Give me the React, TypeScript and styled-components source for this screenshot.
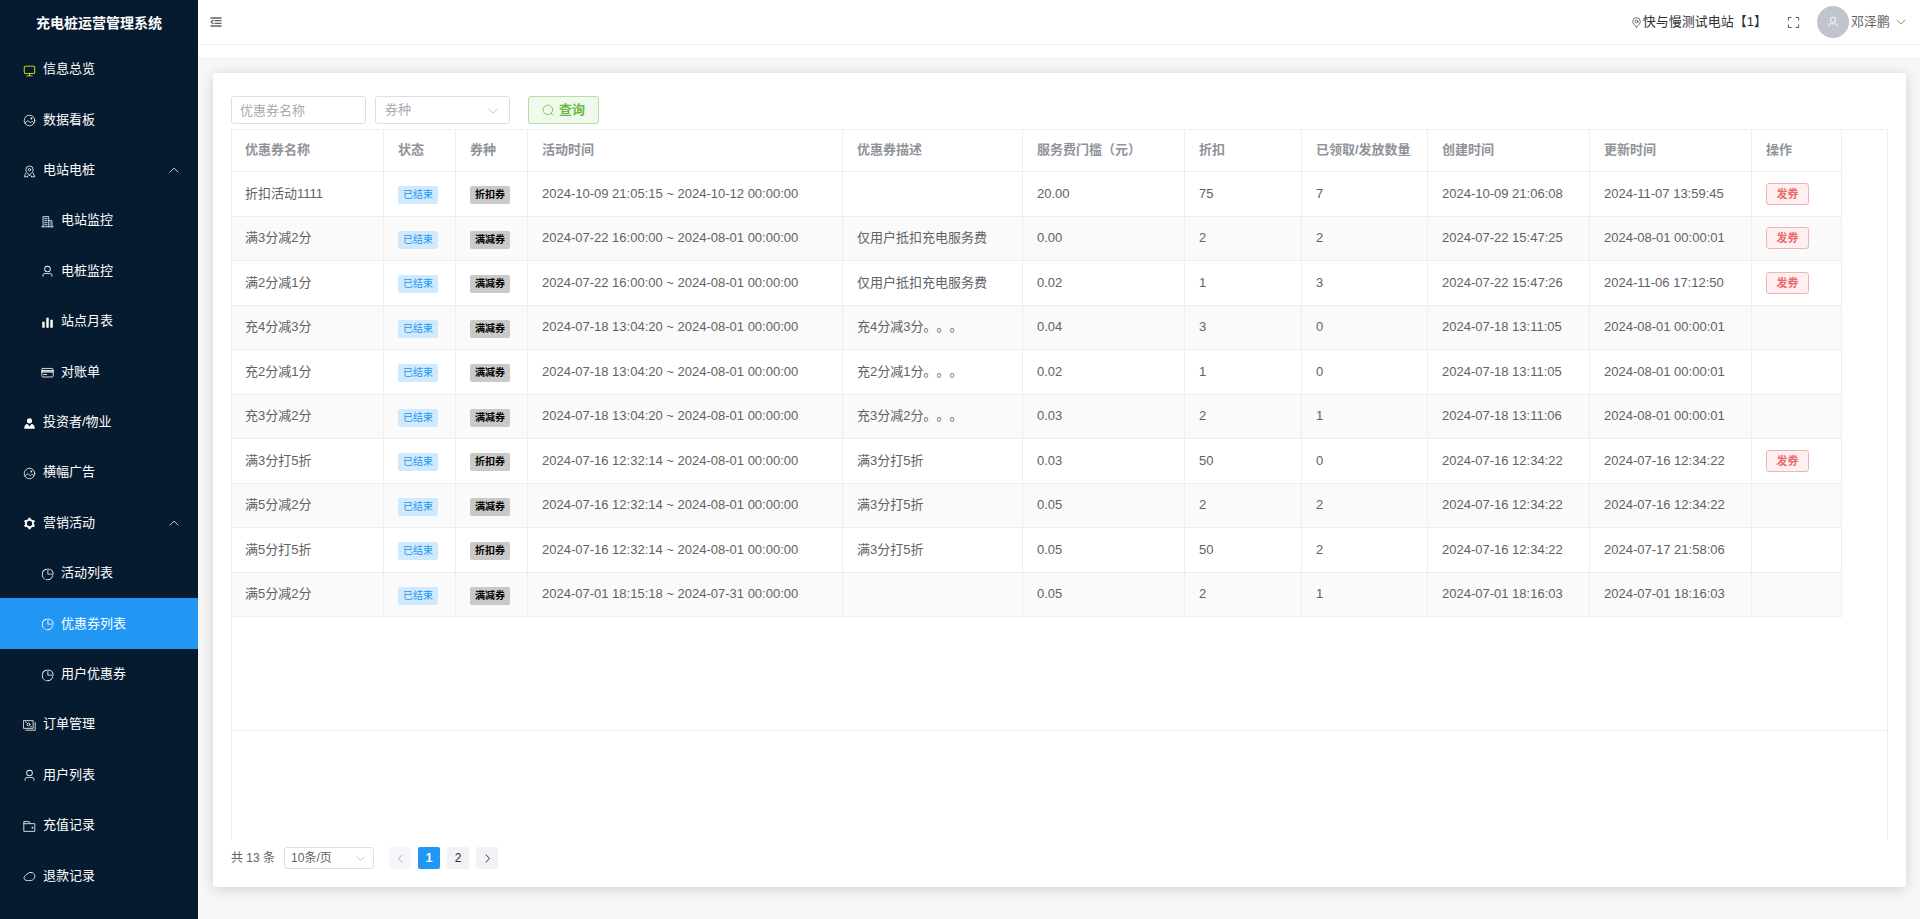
import React from "react";
import styled, { createGlobalStyle } from "styled-components";

const GlobalStyle = createGlobalStyle`
  *, *::before, *::after { box-sizing: border-box; }
  body {
    margin: 0;
    font-family: "Liberation Sans", "Noto Sans CJK SC", sans-serif;
    font-size: 13px;
    line-height: 20px;
    text-spacing-trim: space-all;
    color: #606266;
    background: #f7f7f7;
  }
  button, input, select { font: inherit; }
`;

/* ---------- icons, drawn on a 1024 grid ---------- */

type IconName =
  | "monitor" | "picture" | "place" | "building" | "user" | "bars" | "card"
  | "avatar" | "gear" | "pie" | "money" | "wallet" | "blob" | "down" | "up"
  | "left" | "right" | "fold" | "pin" | "full" | "search";

const Svg = styled.svg<{ $size: number }>`
  display: block;
  flex: none;
  width: ${(p) => p.$size}px;
  height: ${(p) => p.$size}px;
  fill: none;
  stroke: currentColor;
  stroke-width: 64;
  stroke-linecap: round;
  stroke-linejoin: round;
  .solid { fill: currentColor; stroke: none; }
`;

const drawings: Record<IconName, React.ReactNode> = {
  monitor: (
    <path
      className="solid"
      d="M544 768v128h192a32 32 0 1 1 0 64H288a32 32 0 1 1 0-64h192V768H192A128 128 0 0 1 64 640V256a128 128 0 0 1 128-128h640a128 128 0 0 1 128 128v384a128 128 0 0 1-128 128zM192 192a64 64 0 0 0-64 64v384a64 64 0 0 0 64 64h640a64 64 0 0 0 64-64V256a64 64 0 0 0-64-64z"
    />
  ),
  picture: (
    <>
      <circle cx="512" cy="512" r="416" />
      <circle className="solid" cx="660" cy="360" r="76" />
      <path d="M170 720 340 540q40-40 84 0l110 120q40 40 84-6l60-60q40-36 84 0l90 90" />
    </>
  ),
  place: (
    <>
      <path d="M512 800C330 640 224 520 224 368a288 288 0 0 1 576 0c0 152-106 272-288 432z" />
      <circle cx="512" cy="368" r="92" />
      <path d="M220 640 96 928h250M804 640l124 288H678M346 928l50-90M678 928l-50-90" />
    </>
  ),
  building: (
    <>
      <path d="M160 928V128h448v800M608 448h256v480M64 928h896" />
      <path d="M288 288h192M288 448h192M288 608h192M288 768h192M736 608v32M736 768v32" />
    </>
  ),
  user: (
    <path
      className="solid"
      d="M512 512a192 192 0 1 0 0-384 192 192 0 0 0 0 384m0 64a256 256 0 1 1 0-512 256 256 0 0 1 0 512m320 320v-96a96 96 0 0 0-96-96H288a96 96 0 0 0-96 96v96a32 32 0 1 1-64 0v-96a160 160 0 0 1 160-160h448a160 160 0 0 1 160 160v96a32 32 0 1 1-64 0"
    />
  ),
  bars: (
    <path className="solid" d="M416 128h192v800H416zM96 448h192v480H96zM736 288h192v640H736z" />
  ),
  card: (
    <>
      <rect x="64" y="192" width="896" height="672" rx="96" />
      <path className="solid" d="M64 352h896v128H64z" opacity="0.6" />
      <path d="M64 352h896M64 480h896M192 672h256" />
    </>
  ),
  avatar: (
    <path
      className="solid"
      d="M512 96a204 204 0 1 1 0 408 204 204 0 0 1 0-408M360 560l152 190 152-190c160 10 256 110 264 368H96c8-258 104-358 264-368"
    />
  ),
  gear: (
    <>
      <circle cx="512" cy="512" r="286" strokeWidth="150" />
      <path
        strokeWidth="180"
        strokeLinecap="butt"
        d="M512 220V64M512 804v156M260 366 124 288M764 658l136 78M260 658l-136 78M764 366l136-78"
      />
    </>
  ),
  pie: (
    <>
      <path
        className="solid"
        d="M448 68.48v64.832A384.128 384.128 0 0 0 512 896a384.128 384.128 0 0 0 378.688-320h64.768A448.128 448.128 0 0 1 64 512 448.128 448.128 0 0 1 448 68.48z"
      />
      <path
        className="solid"
        d="M576 97.28V448h350.72A384.064 384.064 0 0 0 576 97.28zM512 64V33.152A448 448 0 0 1 990.848 512H512z"
        fillRule="evenodd"
      />
    </>
  ),
  money: (
    <>
      <rect x="64" y="128" width="736" height="608" />
      <path d="M224 880h736V288" />
      <circle cx="432" cy="432" r="110" />
      <path d="M192 256h60M612 608h60" />
    </>
  ),
  wallet: (
    <>
      <path d="M96 128h400l80 160h352v608H96z" />
      <path d="M96 288h480" />
      <circle className="solid" cx="744" cy="608" r="70" />
    </>
  ),
  blob: (
    <path d="M600 190c190-10 330 110 330 290 0 130-60 240-180 310-60 34-130 44-210 44H340c-150 0-260-90-260-210 0-110 80-180 170-220C320 290 440 198 600 190z" />
  ),
  down: <path d="M170 362 512 694l342-332" />,
  up: <path d="M170 684 512 352l342 332" />,
  left: <path d="M652 170 320 512l332 342" />,
  right: <path d="M372 170l332 342-332 342" />,
  fold: (
    <path
      strokeLinecap="butt"
      strokeWidth="112"
      d="M40 170h944M380 400h604M380 624h604M40 854h944M290 340 110 512l180 172"
    />
  ),
  pin: (
    <>
      <path d="M512 940C290 730 160 590 160 416a352 352 0 0 1 704 0c0 174-130 314-352 524z" />
      <circle cx="512" cy="416" r="136" />
    </>
  ),
  full: (
    <path
      strokeLinecap="butt"
      strokeLinejoin="miter"
      strokeWidth="80"
      d="M110 350V110h240M674 110h240v240M914 674v240H674M350 914H110V674"
    />
  ),
  search: (
    <>
      <circle cx="500" cy="500" r="404" />
      <path d="M790 790l110 130" />
    </>
  ),
};

const Icon = ({ name, size = 12 }: { name: IconName; size?: number }) => (
  <Svg viewBox="0 0 1024 1024" $size={size} aria-hidden="true">
    {drawings[name]}
  </Svg>
);

/* ---------- layout ---------- */

const Page = styled.div`
  display: flex;
  min-height: 100vh;
`;

const Sidebar = styled.aside`
  flex: none;
  display: flex;
  flex-direction: column;
  width: 198px;
  padding-bottom: 18px;
  background: #071b30;
  color: #fff;
`;

const Brand = styled.h1`
  margin: 0;
  height: 44px;
  padding-top: 2px;
  font-size: 14px;
  line-height: 42px;
  text-align: center;
`;

const Menu = styled.nav`
  flex: 1;
  display: flex;
  flex-direction: column;
`;

const MenuItem = styled.a<{ $sub?: boolean; $active?: boolean }>`
  flex: 1 0 50px;
  display: flex;
  align-items: center;
  gap: 7px;
  padding: 0 18px 0 ${(p) => (p.$sub ? 41 : 23)}px;
  color: #fff;
  text-decoration: none;
  background: ${(p) => (p.$active ? "#2196f3" : "transparent")};
`;

const MenuIcon = styled.span<{ $color?: string }>`
  padding-top: 2px;
  color: ${(p) => p.$color ?? "inherit"};
`;

const MenuLabel = styled.span`
  flex: 1;
`;

const Content = styled.div`
  flex: 1;
  min-width: 0;
  display: flex;
  flex-direction: column;
`;

const TopBar = styled.header`
  display: flex;
  align-items: center;
  justify-content: space-between;
  height: 45px;
  padding: 0 13px 0 12px;
  background: #fff;
  border-bottom: 1px solid #f0f0f0;
`;

const TabStrip = styled.div`
  height: 14px;
  background: #fff;
  border-bottom: 1px solid #f0f0f0;
`;

const IconButton = styled.button`
  display: flex;
  padding: 0;
  border: 0;
  background: none;
  color: #606266;
  cursor: pointer;
`;

const TopRight = styled.div`
  display: flex;
  align-items: center;
`;

const Station = styled.span`
  display: flex;
  align-items: center;
  gap: 1px;
  margin-right: 20px;
  color: #303133;
`;

const UserMenu = styled.button`
  display: flex;
  align-items: center;
  margin-left: 17px;
  padding: 0;
  border: 0;
  background: none;
  color: #606266;
  cursor: pointer;
`;

const AvatarCircle = styled.span`
  display: flex;
  align-items: center;
  justify-content: center;
  width: 32px;
  height: 32px;
  margin-right: 2px;
  border-radius: 50%;
  background: #c0c4cc;
  color: #fff;
`;

const UserName = styled.span`
  margin-right: 5px;
`;

const Card = styled.main`
  flex: 1;
  display: flex;
  flex-direction: column;
  min-width: 0;
  margin: 14px 14px 32px 15px;
  padding: 23px 18px 18px;
  background: #fff;
  border-radius: 3px;
  box-shadow: 0 2px 14px rgba(0, 0, 0, 0.16);
`;

const Filters = styled.form`
  display: flex;
  margin-bottom: 5px;
`;

const TextField = styled.input`
  width: 135px;
  height: 28px;
  margin-right: 9px;
  padding: 0 8px;
  border: 1px solid #dcdfe6;
  border-radius: 3px;
  outline: none;
  color: #606266;
  &::placeholder { color: #a8abb2; opacity: 1; }
`;

const SelectBox = styled.span<{ $width: number; $height: number; $pad: number; $size: number; $color: string }>`
  position: relative;
  display: block;
  width: ${(p) => p.$width}px;
  select {
    display: block;
    width: 100%;
    height: ${(p) => p.$height}px;
    padding: 0 ${(p) => p.$pad}px;
    border: 1px solid #dcdfe6;
    border-radius: 3px;
    outline: none;
    appearance: none;
    background: #fff;
    font-size: ${(p) => p.$size}px;
    color: ${(p) => p.$color};
  }
  svg {
    position: absolute;
    top: 50%;
    right: ${(p) => p.$pad + 2}px;
    margin-top: -5px;
    color: #a8abb2;
    pointer-events: none;
  }
`;

const SearchButton = styled.button`
  display: flex;
  align-items: center;
  justify-content: center;
  gap: 5px;
  width: 71px;
  height: 28px;
  margin-left: 18px;
  padding: 0;
  border: 1px solid #b3e19d;
  border-radius: 3px;
  background: #f0f9eb;
  color: #67b944;
  font-weight: 700;
  cursor: pointer;
`;

const TableFrame = styled.div`
  flex: 1;
  display: flex;
  min-width: 0;
  padding-bottom: 108px;
  border: solid #ebeef5;
  border-width: 0 1px;
`;

const TableArea = styled.div`
  flex: 1;
  min-width: 0;
  overflow-x: auto;
  border: solid #ebeef5;
  border-width: 1px 0;
`;

const Table = styled.table`
  width: 1610px;
  table-layout: fixed;
  border-collapse: separate;
  border-spacing: 0;
  th, td {
    padding: 0 0 1px 14px;
    border: solid #ebeef5;
    border-width: 0 1px 1px 0;
    text-align: left;
    white-space: nowrap;
  }
  th:first-child, td:first-child { padding-left: 13px; }
  th { height: 42px; color: #909399; }
  tbody tr:nth-child(odd) { height: 45px; }
  tbody tr:nth-child(even) { height: 44px; background: #fafafa; }
`;

const Tag = styled.span<{ $tone: "info" | "grey" }>`
  display: block;
  width: 40px;
  height: 18px;
  margin-top: 3px;
  border-radius: 2px;
  font-size: 10px;
  line-height: 18px;
  text-align: center;
  font-weight: ${(p) => (p.$tone === "info" ? 400 : 700)};
  color: ${(p) => (p.$tone === "info" ? "#2196f3" : "#000")};
  background: ${(p) => (p.$tone === "info" ? "#d0e9fd" : "#c9c9c9")};
`;

const GrantButton = styled.button`
  display: block;
  width: 43px;
  height: 22px;
  padding: 0;
  border: 1px solid #f0b4b4;
  border-radius: 3px;
  background: #fef0f0;
  color: #e96a6a;
  font-size: 11px;
  line-height: 20px;
  font-weight: 700;
  cursor: pointer;
`;

const Pagination = styled.div`
  display: flex;
  align-items: center;
  height: 22px;
  margin-top: 8px;
  font-size: 12px;
`;

const Total = styled.span`
  margin-right: 9px;
`;

const Pages = styled.div`
  display: flex;
  gap: 7px;
  margin-left: 15px;
`;

const PageButton = styled.button<{ $current?: boolean }>`
  display: flex;
  align-items: center;
  justify-content: center;
  width: 22px;
  height: 22px;
  padding: 0;
  border: 0;
  border-radius: 2px;
  background: ${(p) => (p.$current ? "#2196f3" : "#f0f2f5")};
  color: ${(p) => (p.$current ? "#fff" : "#303133")};
  font-weight: ${(p) => (p.$current ? 700 : 400)};
  cursor: pointer;
  svg { stroke-width: 88; }
  &:disabled { background: #f5f7fa; color: #a8abb2; }
`;

/* ---------- data ---------- */

type Entry = { label: string; icon: IconName; sub?: boolean; open?: boolean; active?: boolean; color?: string };

const menu: Entry[] = [
  { label: "信息总览", icon: "monitor", color: "#ffff00" },
  { label: "数据看板", icon: "picture" },
  { label: "电站电桩", icon: "place", open: true },
  { label: "电站监控", icon: "building", sub: true },
  { label: "电桩监控", icon: "user", sub: true },
  { label: "站点月表", icon: "bars", sub: true },
  { label: "对账单", icon: "card", sub: true },
  { label: "投资者/物业", icon: "avatar" },
  { label: "横幅广告", icon: "picture" },
  { label: "营销活动", icon: "gear", open: true },
  { label: "活动列表", icon: "pie", sub: true },
  { label: "优惠券列表", icon: "pie", sub: true, active: true },
  { label: "用户优惠券", icon: "pie", sub: true },
  { label: "订单管理", icon: "money" },
  { label: "用户列表", icon: "user" },
  { label: "充值记录", icon: "wallet" },
  { label: "退款记录", icon: "blob" },
];

const columns: [string, number][] = [
  ["优惠券名称", 152],
  ["状态", 72],
  ["券种", 72],
  ["活动时间", 315],
  ["优惠券描述", 180],
  ["服务费门槛（元）", 162],
  ["折扣", 117],
  ["已领取/发放数量", 126],
  ["创建时间", 162],
  ["更新时间", 162],
  ["操作", 90],
];

type Coupon = {
  name: string; kind: string; period: string; note: string; threshold: string;
  discount: number; count: number; created: string; updated: string; grant?: boolean;
};

const coupons: Coupon[] = [
  { name: "折扣活动1111", kind: "折扣券", period: "2024-10-09 21:05:15 ~ 2024-10-12 00:00:00", note: "", threshold: "20.00", discount: 75, count: 7, created: "2024-10-09 21:06:08", updated: "2024-11-07 13:59:45", grant: true },
  { name: "满3分减2分", kind: "满减券", period: "2024-07-22 16:00:00 ~ 2024-08-01 00:00:00", note: "仅用户抵扣充电服务费", threshold: "0.00", discount: 2, count: 2, created: "2024-07-22 15:47:25", updated: "2024-08-01 00:00:01", grant: true },
  { name: "满2分减1分", kind: "满减券", period: "2024-07-22 16:00:00 ~ 2024-08-01 00:00:00", note: "仅用户抵扣充电服务费", threshold: "0.02", discount: 1, count: 3, created: "2024-07-22 15:47:26", updated: "2024-11-06 17:12:50", grant: true },
  { name: "充4分减3分", kind: "满减券", period: "2024-07-18 13:04:20 ~ 2024-08-01 00:00:00", note: "充4分减3分。。。", threshold: "0.04", discount: 3, count: 0, created: "2024-07-18 13:11:05", updated: "2024-08-01 00:00:01" },
  { name: "充2分减1分", kind: "满减券", period: "2024-07-18 13:04:20 ~ 2024-08-01 00:00:00", note: "充2分减1分。。。", threshold: "0.02", discount: 1, count: 0, created: "2024-07-18 13:11:05", updated: "2024-08-01 00:00:01" },
  { name: "充3分减2分", kind: "满减券", period: "2024-07-18 13:04:20 ~ 2024-08-01 00:00:00", note: "充3分减2分。。。", threshold: "0.03", discount: 2, count: 1, created: "2024-07-18 13:11:06", updated: "2024-08-01 00:00:01" },
  { name: "满3分打5折", kind: "折扣券", period: "2024-07-16 12:32:14 ~ 2024-08-01 00:00:00", note: "满3分打5折", threshold: "0.03", discount: 50, count: 0, created: "2024-07-16 12:34:22", updated: "2024-07-16 12:34:22", grant: true },
  { name: "满5分减2分", kind: "满减券", period: "2024-07-16 12:32:14 ~ 2024-08-01 00:00:00", note: "满3分打5折", threshold: "0.05", discount: 2, count: 2, created: "2024-07-16 12:34:22", updated: "2024-07-16 12:34:22" },
  { name: "满5分打5折", kind: "折扣券", period: "2024-07-16 12:32:14 ~ 2024-08-01 00:00:00", note: "满3分打5折", threshold: "0.05", discount: 50, count: 2, created: "2024-07-16 12:34:22", updated: "2024-07-17 21:58:06" },
  { name: "满5分减2分", kind: "满减券", period: "2024-07-01 18:15:18 ~ 2024-07-31 00:00:00", note: "", threshold: "0.05", discount: 2, count: 1, created: "2024-07-01 18:16:03", updated: "2024-07-01 18:16:03" },
];

export default function App() {
  return (
    <Page>
      <GlobalStyle />
      <Sidebar>
        <Brand>充电桩运营管理系统</Brand>
        <Menu>
          {menu.map((m) => (
            <MenuItem key={m.label} href="#" $sub={m.sub} $active={m.active}>
              <MenuIcon $color={m.color}><Icon name={m.icon} size={13} /></MenuIcon>
              <MenuLabel>{m.label}</MenuLabel>
              {m.open && <Icon name="up" size={12} />}
            </MenuItem>
          ))}
        </Menu>
      </Sidebar>
      <Content>
        <TopBar>
          <IconButton aria-label="收起菜单"><Icon name="fold" /></IconButton>
          <TopRight>
            <Station><Icon name="pin" size={11} />快与慢测试电站【1】</Station>
            <IconButton aria-label="全屏"><Icon name="full" size={13} /></IconButton>
            <UserMenu>
              <AvatarCircle><Icon name="user" /></AvatarCircle>
              <UserName>邓泽鹏</UserName>
              <Icon name="down" />
            </UserMenu>
          </TopRight>
        </TopBar>
        <TabStrip />
        <Card>
          <Filters onSubmit={(e) => e.preventDefault()}>
            <TextField aria-label="优惠券名称" placeholder="优惠券名称" />
            <SelectBox $width={135} $height={28} $pad={9} $size={13} $color="#a8abb2">
              <select aria-label="券种" defaultValue="">
                <option value="">券种</option>
                <option>折扣券</option>
                <option>满减券</option>
              </select>
              <Icon name="down" />
            </SelectBox>
            <SearchButton type="submit"><Icon name="search" />查询</SearchButton>
          </Filters>
          <TableFrame>
            <TableArea>
              <Table>
                <colgroup>
                  {columns.map(([label, width]) => <col key={label} width={width} />)}
                </colgroup>
                <thead>
                  <tr>{columns.map(([label]) => <th key={label} scope="col">{label}</th>)}</tr>
                </thead>
                <tbody>
                  {coupons.map((c, i) => (
                    <tr key={i}>
                      <td>{c.name}</td>
                      <td><Tag $tone="info">已结束</Tag></td>
                      <td><Tag $tone="grey">{c.kind}</Tag></td>
                      <td>{c.period}</td>
                      <td>{c.note}</td>
                      <td>{c.threshold}</td>
                      <td>{c.discount}</td>
                      <td>{c.count}</td>
                      <td>{c.created}</td>
                      <td>{c.updated}</td>
                      <td>{c.grant && <GrantButton>发券</GrantButton>}</td>
                    </tr>
                  ))}
                </tbody>
              </Table>
            </TableArea>
          </TableFrame>
          <Pagination>
            <Total>共 13 条</Total>
            <SelectBox $width={90} $height={22} $pad={6} $size={12} $color="#606266">
              <select aria-label="每页条数" defaultValue="10">
                <option value="10">10条/页</option>
                <option value="20">20条/页</option>
              </select>
              <Icon name="down" size={11} />
            </SelectBox>
            <Pages>
              <PageButton disabled aria-label="上一页"><Icon name="left" size={11} /></PageButton>
              <PageButton $current>1</PageButton>
              <PageButton>2</PageButton>
              <PageButton aria-label="下一页"><Icon name="right" size={11} /></PageButton>
            </Pages>
          </Pagination>
        </Card>
      </Content>
    </Page>
  );
}
